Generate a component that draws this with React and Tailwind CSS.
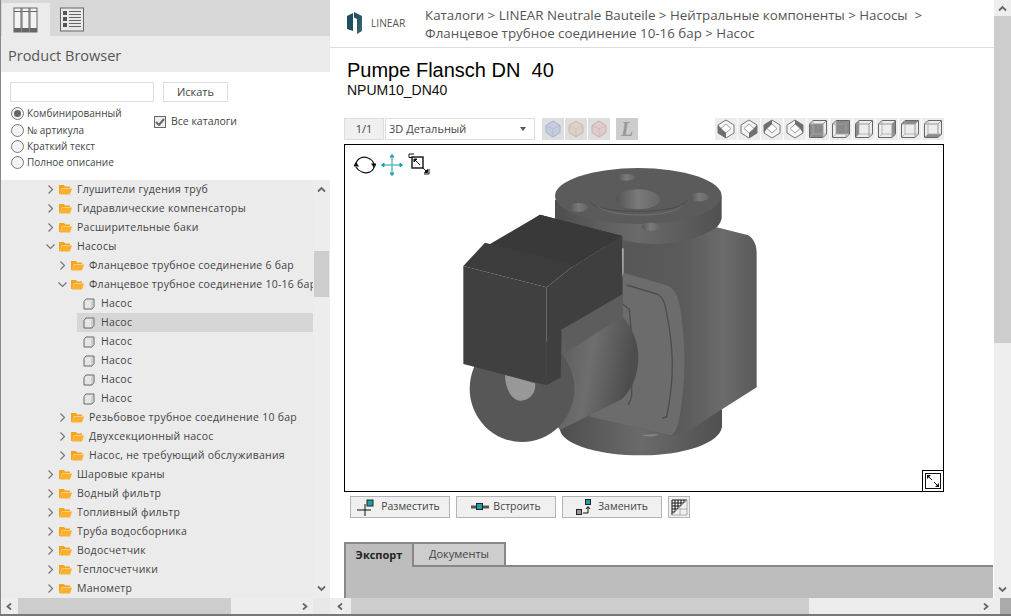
import React from "react";

const Chevron = ({ open }) => (
  <svg width="9" height="9" viewBox="0 0 9 9" className="shrink-0" fill="none" stroke="#777" strokeWidth="1.2">
    {open ? <path d="M0.5 2.5 L4.5 6.5 L8.5 2.5" /> : <path d="M2.5 0.5 L6.5 4.5 L2.5 8.5" />}
  </svg>
);

const Folder = () => (
  <svg width="13" height="11" viewBox="0 0 13 11" className="shrink-0">
    <path d="M0 1 H5 L6 2.5 H11 V4 H3 L1 10 H0 Z" fill="#f7a416" />
    <path d="M3.3 4.5 H13 L11 10.6 H0.8 Z" fill="#fbb02d" />
  </svg>
);

const Cube = () => (
  <svg width="12" height="12" viewBox="0 0 12 12" className="shrink-0">
    <path d="M3 1 H11 V8.5 L9 11 H1 V3.5 Z" fill="#e6e6e6" stroke="#666" strokeWidth="1" strokeLinejoin="round" />
    <path d="M9 3.5 V11 M9 3.5 L11 1" fill="none" stroke="#999" strokeWidth="0.6" />
  </svg>
);

const FolderRow = ({ level, open, children }) => (
  <div className={level === 0 ? "flex h-[19px] items-center pl-[45px] whitespace-nowrap" : "flex h-[19px] items-center pl-[57px] whitespace-nowrap"}>
    <Chevron open={open} />
    <span className="ml-[4px]"><Folder /></span>
    <span className="ml-[5px]">{children}</span>
  </div>
);

const Leaf = ({ selected }) => (
  <div className="flex h-[19px] items-center pl-[76px]">
    <div className={selected ? "flex h-[19px] flex-1 items-center bg-[#d6d6d6] pl-[6px]" : "flex h-[19px] flex-1 items-center pl-[6px]"}>
      <Cube />
      <span className="ml-[6px]">Насос</span>
    </div>
  </div>
);

const Radio = ({ checked, children }) => (
  <label className="flex h-[16.4px] items-center gap-[3px]">
    <span className="flex h-[13px] w-[13px] items-center justify-center rounded-full border border-[#777] bg-[#f4f4f4]">
      {checked && <span className="h-[7px] w-[7px] rounded-full bg-[#666]" />}
    </span>
    <span>{children}</span>
  </label>
);

const Diamond = ({ dark }) => (
  <svg width="18" height="20" viewBox="0 0 18 20">
    <path d="M9 1 L17 6 V14 L9 19 L1 14 V6 Z" fill="#f4f4f4" stroke="#777" strokeWidth="1" strokeLinejoin="round" />
    <path d={dark} fill="#6e6e6e" />
    <path d="M9 5 L14 9.5 L9 14 L4 9.5 Z" fill="#fff" stroke="#888" strokeWidth="0.8" />
  </svg>
);

const WireCube = ({ face }) => (
  <svg width="20" height="20" viewBox="0 0 20 20" fill="none">
    <path d={face} fill="#8a8a8a" />
    <path d="M1.5 5 L5 1.5 H18.5 V15 L15 18.5 H1.5 Z" stroke="#666" strokeWidth="1" />
    <path d="M1.5 5 H15 V18.5 M15 5 L18.5 1.5" stroke="#999" strokeWidth="1" />
    <path d="M5 1.5 V15 H18.5 M5 15 L1.5 18.5" stroke="#aaa" strokeWidth="0.8" />
  </svg>
);

const ViewBtn = ({ children }) => (
  <div className="flex h-[22px] w-[22px] items-center justify-center bg-[#ececec]">{children}</div>
);

const SmallArrow = ({ d }) => (
  <svg width="9" height="7" viewBox="0 0 9 7" fill="none" stroke="#666" strokeWidth="1.8"><path d={d} /></svg>
);

const ColorDiamond = ({ fill, stroke }) => (
  <div className="flex h-[22px] w-[22px] items-center justify-center bg-[#dedede]">
    <svg width="18" height="18" viewBox="0 0 18 18">
      <path d="M9 1 L16 5.5 V12.5 L9 17 L2 12.5 V5.5 Z" fill={fill} stroke={stroke} strokeWidth="1" strokeLinejoin="round" />
      <path d="M2 5.5 L9 9 L16 5.5 M9 9 V17" fill="none" stroke={stroke} strokeWidth="0.6" />
    </svg>
  </div>
);

const Pump = () => (
  <svg width="320" height="320" viewBox="0 0 960 960" className="block">
    <defs>
      <linearGradient id="fl" x1="0" x2="1" y1="0" y2="0">
        <stop offset="0" stopColor="#4e4e4e" /><stop offset="0.5" stopColor="#6a6a6a" /><stop offset="1" stopColor="#505050" />
      </linearGradient>
      <linearGradient id="bd" x1="0" x2="1" y1="0" y2="0">
        <stop offset="0" stopColor="#555" /><stop offset="0.55" stopColor="#5a5a5a" /><stop offset="0.8" stopColor="#6b6b6b" /><stop offset="1" stopColor="#5a5a5a" />
      </linearGradient>
      <linearGradient id="cy" x1="0" x2="1" y1="0" y2="0.25">
        <stop offset="0" stopColor="#505050" /><stop offset="0.6" stopColor="#6e6e6e" /><stop offset="1" stopColor="#4d4d4d" />
      </linearGradient>
      <linearGradient id="hl" x1="0" x2="1" y1="0" y2="0">
        <stop offset="0" stopColor="#555" /><stop offset="0.5" stopColor="#7a7a7a" /><stop offset="1" stopColor="#666" />
      </linearGradient>
    </defs>
    <path d="M360 760 V840 C370 890 500 918 610 916 C730 915 840 880 846 830 V770 Z" fill="url(#fl)" />
    <path d="M345 150 V215 C360 270 480 297 600 296 C720 295 835 260 845 205 V140 Z" fill="url(#fl)" />
    <path d="M550 270 C640 296 760 280 830 232 L925 256 C942 268 950 285 950 310 V712 L745 842 L700 858 L450 800 L550 370 Z" fill="url(#bd)" />
    <ellipse cx="595" cy="138" rx="250" ry="84" fill="#5b5b5b" />
    <path d="M450 155 C470 195 720 195 742 150" fill="none" stroke="#4b4b4b" strokeWidth="3" />
    <path d="M470 165 C500 205 700 205 728 165" fill="none" stroke="#747474" strokeWidth="2.5" />
    <ellipse cx="594" cy="148" rx="66" ry="30" fill="url(#hl)" />
    <ellipse cx="415" cy="172" rx="28" ry="13" fill="url(#hl)" />
    <ellipse cx="778" cy="141" rx="28" ry="13" fill="url(#hl)" />
    <ellipse cx="558" cy="82" rx="27" ry="10" fill="url(#hl)" />
    <ellipse cx="632" cy="230" rx="27" ry="12" fill="url(#hl)" />
    <path d="M550 368 L680 406 C705 415 715 440 720 470 C735 570 740 660 722 780 C715 830 705 855 690 856 L450 800 Z" fill="#6c6c6c" />
    <path d="M560 405 L650 432 C670 440 675 460 680 490 C700 590 705 680 680 800 L666 805" fill="none" stroke="#4d4d4d" strokeWidth="4" />
    <path d="M545 460 L568 478 L575 560 V740 L565 765" fill="none" stroke="#4d4d4d" strokeWidth="4" />
    <path d="M605 855 C620 862 650 860 655 852" fill="#888" />
    <path d="M365 540 L548 430 V500 C585 540 600 600 594 640 C590 690 570 725 545 748 L360 840 L300 760 Z" fill="url(#cy)" />
    <path d="M365 540 L548 430 V500 L380 605 Z" fill="#5d5d5d" />
    <ellipse cx="246" cy="716" rx="157" ry="160" fill="#575757" />
    <path d="M195 675 L285 700 C290 730 265 752 240 752 C215 750 195 715 195 675 Z" fill="#989898" />
    <path d="M70 348 L320 412 V706 L70 642 Z" fill="#404040" />
    <path d="M320 412 L397 350 L547 258 L548 432 L365 540 L362 682 L320 706 Z" fill="#3f3f3f" />
    <path d="M70 348 L135 278 L150 282 L300 194 L547 258 L397 350 L320 412 Z" fill="#3c3c3c" />
    <path d="M160 282 L300 194 L547 258 L397 350 L385 340 Z" fill="#393939" />
  </svg>
);

export default function App() {
  return (
    <div className="flex h-[616px] w-[1011px] flex-col overflow-hidden bg-white font-['Open_Sans',sans-serif] text-[#444]">
      <div className="flex h-[598px]">
        {/* left panel */}
        <div className="flex w-[330px] shrink-0 flex-col border-l border-[#888]">
          <div className="flex h-[36px] items-end gap-[1px] bg-[#d8d8d8] pl-[1px]">
            <div className="flex h-[33px] w-[48px] items-center justify-center bg-[#ebebeb]">
              <svg width="26" height="26" viewBox="0 0 26 26">
                {[1, 9, 17].map((x) => (
                  <g key={x}>
                    <rect x={x} y="1" width="7" height="24" fill="#f4f4f4" stroke="#666" strokeWidth="1" />
                    <rect x={x} y="4" width="7" height="1" fill="#666" />
                    <rect x={x} y="21" width="7" height="4" fill="#666" />
                  </g>
                ))}
              </svg>
            </div>
            <div className="flex h-[33px] w-[42px] items-center justify-center">
              <svg width="25" height="25" viewBox="0 0 25 25">
                <rect x="0.5" y="1" width="23" height="23" fill="#e9e9e9" stroke="#666" strokeWidth="1" />
                {[4, 10, 16].map((y) => (
                  <g key={y}>
                    <rect x="3" y={y} width="4" height="4" fill="#555" />
                    <rect x="9" y={y} width="12" height="1" fill="#666" />
                    <rect x="9" y={y + 3} width="12" height="1" fill="#666" />
                  </g>
                ))}
              </svg>
            </div>
          </div>
          <div className="flex h-[36px] items-center bg-[#ebebeb] pl-[7px] pt-[4px] text-[14.5px] text-[#555]">Product Browser</div>
          <div className="h-[108px] pl-[9px] pt-[10px] text-[10.5px]">
            <div className="flex items-center">
              <input className="h-[20px] w-[144px] border border-[#ddd] bg-white" aria-label="search" />
              <button className="ml-[9px] h-[20px] w-[65px] border border-[#ddd] bg-white text-[11px] text-[#444]">Искать</button>
            </div>
            <div className="mt-[3.5px] flex">
              <div className="w-[144px] pl-[1px] text-[10px]">
                <Radio checked>Комбинированный</Radio>
                <Radio>№ артикула</Radio>
                <Radio>Краткий текст</Radio>
                <Radio>Полное описание</Radio>
              </div>
              <div className="mt-[8px] flex h-[16px] items-center gap-[5px]">
                <span className="flex h-[12px] w-[12px] items-center justify-center border border-[#666] bg-[#eee]">
                  <svg width="10" height="8" viewBox="0 0 10 8" fill="none" stroke="#666" strokeWidth="2"><path d="M1 4 L4 7 L9 1" /></svg>
                </span>
                <span>Все каталоги</span>
              </div>
            </div>
          </div>
          <div className="flex min-h-0 flex-1">
            <div className="w-[312px] overflow-hidden bg-[#ebebeb] text-[10.5px] tracking-[0.25px]">
              <FolderRow level={0}>Глушители гудения труб</FolderRow>
              <FolderRow level={0}>Гидравлические компенсаторы</FolderRow>
              <FolderRow level={0}>Расширительные баки</FolderRow>
              <FolderRow level={0} open>Насосы</FolderRow>
              <FolderRow level={1}>Фланцевое трубное соединение 6 бар</FolderRow>
              <FolderRow level={1} open>Фланцевое трубное соединение 10-16 бар</FolderRow>
              <Leaf />
              <Leaf selected />
              <Leaf />
              <Leaf />
              <Leaf />
              <Leaf />
              <FolderRow level={1}>Резьбовое трубное соединение 10 бар</FolderRow>
              <FolderRow level={1}>Двухсекционный насос</FolderRow>
              <FolderRow level={1}>Насос, не требующий обслуживания</FolderRow>
              <FolderRow level={0}>Шаровые краны</FolderRow>
              <FolderRow level={0}>Водный фильтр</FolderRow>
              <FolderRow level={0}>Топливный фильтр</FolderRow>
              <FolderRow level={0}>Труба водосборника</FolderRow>
              <FolderRow level={0}>Водосчетчик</FolderRow>
              <FolderRow level={0}>Теплосчетчики</FolderRow>
              <FolderRow level={0}>Манометр</FolderRow>
            </div>
            <div className="flex w-[17px] flex-col items-center bg-[#ededed]">
              <div className="flex h-[18px] items-center"><SmallArrow d="M1 5.5 L4.5 2 L8 5.5" /></div>
              <div className="mt-[53px] h-[46px] w-[15px] bg-[#cdcdcd]" />
              <div className="flex-1" />
              <div className="flex h-[20px] items-center"><SmallArrow d="M1 1.5 L4.5 5 L8 1.5" /></div>
            </div>
          </div>
        </div>

        {/* right panel */}
        <div className="flex min-w-0 flex-1 flex-col">
          <div className="flex h-[48px] shrink-0 border-b border-[#ddd]">
            <div className="flex w-[95px] items-center gap-[8px] pl-[17px]">
              <svg width="16" height="23" viewBox="0 0 16 23">
                <defs>
                  <linearGradient id="lg" x1="0" x2="1" y1="0" y2="1">
                    <stop offset="0" stopColor="#1c4a57" /><stop offset="1" stopColor="#3f6a75" />
                  </linearGradient>
                </defs>
                <path d="M0 4 L6 1 V19 L0 17 Z" fill="#1f4f5c" />
                <path d="M7 0 L15 4 V19 L10 22 V7 L7 5.5 Z" fill="url(#lg)" />
              </svg>
              <span className="text-[10.2px] text-[#555]">LINEAR</span>
            </div>
            <div className="pt-[6px] text-[13.35px] leading-[18px] whitespace-nowrap text-[#555]">
              Каталоги &gt; LINEAR Neutrale Bauteile &gt; Нейтральные компоненты &gt; Насосы &nbsp;&gt;<br />
              Фланцевое трубное соединение 10-16 бар &gt; Насос
            </div>
          </div>
          <div className="min-h-0 flex-1 overflow-hidden pl-[14px]">
            <div className="mt-[10px] pl-[3px] font-['Liberation_Sans',sans-serif] text-[20px] leading-[24px] whitespace-pre text-black">Pumpe Flansch DN  40</div>
            <div className="pl-[3px] font-['Liberation_Sans',sans-serif] text-[14px] leading-[16px] text-[#111]">NPUM10_DN40</div>
            <div className="mt-[20px] flex h-[22px] w-[600px] items-center text-[11px]">
              <div className="flex h-[22px] w-[40px] items-center justify-center border border-[#ddd] bg-[#f0f0f0]">1/1</div>
              <div className="ml-[1px] flex h-[22px] w-[150px] items-center justify-between border border-[#ddd] bg-white pl-[3px] pr-[8px]">
                <span>3D Детальный</span>
                <span className="h-0 w-0 border-x-[3.5px] border-t-[4px] border-x-transparent border-t-[#555]" />
              </div>
              <div className="ml-[7px] flex gap-[1px]">
                <ColorDiamond fill="#c5cce0" stroke="#a9b2cc" />
                <ColorDiamond fill="#ddd2c6" stroke="#c8baaa" />
                <ColorDiamond fill="#e0cccc" stroke="#ccb0b0" />
              </div>
              <div className="ml-[6px] flex h-[22px] w-[22px] items-center justify-center bg-[#cdcdcd] font-['Liberation_Serif',serif] text-[20px] font-bold italic text-[#9a9a9a]">L</div>
              <div className="ml-auto flex gap-[1px]">
                <ViewBtn><Diamond dark="M1 6 L9 14 V19 L1 14 Z" /></ViewBtn>
                <ViewBtn><Diamond dark="M17 6 L9 14 V19 L17 14 Z" /></ViewBtn>
                <ViewBtn><Diamond dark="M1 14 V6 L9 1 V5 L4 9.5 Z" /></ViewBtn>
                <ViewBtn><Diamond dark="M17 14 V6 L9 1 V5 L14 9.5 Z" /></ViewBtn>
                <ViewBtn><WireCube face="M1.5 5 H15 V18.5 H1.5 Z" /></ViewBtn>
                <ViewBtn><WireCube face="M5 1.5 H18.5 V15 H5 Z" /></ViewBtn>
                <ViewBtn><WireCube face="M1.5 5 L5 1.5 V15 L1.5 18.5 Z" /></ViewBtn>
                <ViewBtn><WireCube face="M15 5 L18.5 1.5 V15 L15 18.5 Z" /></ViewBtn>
                <ViewBtn><WireCube face="M1.5 5 L5 1.5 H18.5 L15 5 Z" /></ViewBtn>
                <ViewBtn><WireCube face="M1.5 18.5 L5 15 H18.5 L15 18.5 Z" /></ViewBtn>
              </div>
            </div>
            <div className="relative mt-[4px] h-[348px] w-[600px] border border-black bg-white pl-[95px] pt-[5px]">
              <Pump />
              <div className="absolute left-[9px] top-[9px] flex items-start gap-[5px]">
                <svg width="22" height="22" viewBox="0 0 22 22" fill="none" stroke="#111" strokeWidth="1.2">
                  <path d="M2 10 C3 4 9 2 14 4 C17 5 19 7 20 10" />
                  <path d="M20 13 C19 18 13 20 8 18 C5 17 3 15 2 13" />
                  <path d="M0 12 L2 9 L4 12 Z M18 10 L20 13 L22 10 Z" fill="#111" />
                </svg>
                <svg width="22" height="22" viewBox="0 0 22 22" fill="none" stroke="#1aa0aa" strokeWidth="1">
                  <path d="M11 1 V21 M1 11 H21" />
                  <path d="M9 3 L11 0.5 L13 3 Z M9 19 L11 21.5 L13 19 Z M3 9 L0.5 11 L3 13 Z M19 9 L21.5 11 L19 13 Z" fill="#1aa0aa" />
                </svg>
                <svg width="22" height="22" viewBox="0 0 22 22" fill="none" stroke="#111" strokeWidth="1" className="-mt-[1px]">
                  <path d="M5 4.5 H1 V1 H6 M21 16 V21 H16" />
                  <rect x="4" y="4" width="11" height="11" strokeWidth="1.4" />
                  <path d="M6.5 6.5 L12 12 M14 14 L19 19" />
                  <path d="M6 6 H9 L6 9 Z M19.5 19.5 H16.5 L19.5 16.5 Z" fill="#111" />
                </svg>
              </div>
              <div className="absolute bottom-0 right-0 flex h-[21px] w-[21px] items-center justify-center border-l border-t border-black bg-white">
                <svg width="16" height="16" viewBox="0 0 16 16" fill="none" stroke="#111" strokeWidth="1">
                  <rect x="0.5" y="0.5" width="15" height="15" />
                  <path d="M3 3 L7 7 M13 13 L9 9" />
                  <path d="M2 2 H6 L2 6 Z M14 14 H10 L14 10 Z" fill="#111" stroke="none" />
                </svg>
              </div>
            </div>
            <div className="mt-[4px] flex gap-[6px] pl-[6px] text-[10.5px]">
              <button className="flex h-[22px] w-[100px] items-center justify-center gap-[4px] border border-[#b4b4b4] bg-[#f0f0f0] pr-[3px]">
                <svg width="20" height="17" viewBox="0 0 20 17" fill="none">
                  <path d="M8 5 V17 M0 11 H14" stroke="#111" strokeWidth="1" />
                  <rect x="10" y="1" width="6" height="6" fill="#1aa0aa" stroke="#222" strokeWidth="1" />
                </svg>
                Разместить
              </button>
              <button className="flex h-[22px] w-[100px] items-center justify-center gap-[4px] border border-[#b4b4b4] bg-[#f0f0f0]">
                <svg width="18" height="8" viewBox="0 0 18 8">
                  <rect x="0" y="2.5" width="18" height="3" fill="#555" />
                  <rect x="5.5" y="0.5" width="6" height="6" fill="#1aa0aa" stroke="#222" strokeWidth="1" />
                </svg>
                Встроить
              </button>
              <button className="flex h-[22px] w-[100px] items-center justify-center gap-[4px] border border-[#b4b4b4] bg-[#f0f0f0]">
                <svg width="18" height="17" viewBox="0 0 18 17" fill="none">
                  <rect x="0.5" y="10.5" width="5" height="5" fill="#999" stroke="#222" strokeWidth="1" />
                  <rect x="9.5" y="0.5" width="5" height="5" fill="#1aa0aa" stroke="#222" strokeWidth="1" />
                  <path d="M7 14 H12 V8 M10 10 L12 7.5 L14 10" stroke="#111" strokeWidth="1" />
                </svg>
                Заменить
              </button>
              <button className="flex h-[22px] w-[22px] items-center justify-center border border-[#b4b4b4] bg-[#f0f0f0]">
                <svg width="17" height="17" viewBox="0 0 17 17" fill="none">
                  <path d="M1 1 H16 L1 16 Z" fill="#fff" />
                  <path d="M1 1 H16 M1 4 H13 M1 7 H10 M1 10 H7 M1 13 H4 M1 1 V16 M4 1 V13 M7 1 V10 M10 1 V7 M13 1 V4" stroke="#111" strokeWidth="1" />
                  <path d="M16 1 L1 16 H16 Z M9 9 V16 M9 10 H16" stroke="#999" strokeWidth="0.8" />
                </svg>
              </button>
            </div>
            <div className="mt-[24px] flex h-[25px] pr-[1px]">
              <div className="flex w-[70px] items-center justify-center border-2 border-b-0 border-[#888] bg-[#bdbdbd] pb-[1px] text-[11px] font-bold text-[#222]">Экспорт</div>
              <div className="flex w-[92px] items-center justify-center border-y-2 border-r-2 border-b-[#888] border-r-[#888] border-t-[#888] bg-[#cdcdcd] text-[11px] text-[#444]">Документы</div>
              <div className="flex-1 border-b-2 border-[#888]" />
            </div>
            <div className="mr-[1px] h-[40px] border-l-2 border-[#888] bg-[#bdbdbd]" />
          </div>
        </div>

        {/* page scrollbar */}
        <div className="flex w-[17px] shrink-0 flex-col items-center bg-[#eeeeee]">
          <div className="flex h-[16px] items-center"><SmallArrow d="M1 5.5 L4.5 2 L8 5.5" /></div>
          <div className="h-[327px] w-full bg-[#cdcdcd]" />
          <div className="flex-1" />
          <div className="flex h-[18px] items-center"><SmallArrow d="M1 1.5 L4.5 5 L8 1.5" /></div>
        </div>
      </div>

      {/* bottom scrollbars */}
      <div className="flex h-[16px] shrink-0">
        <div className="flex w-[313px] items-center border-l border-[#888] bg-[#ededed]">
          <div className="flex w-[17px] justify-center"><SmallArrow d="M6 0.5 L2.5 3.5 L6 6.5" /></div>
          <div className="h-[16px] w-[213px] bg-[#cdcdcd]" />
          <div className="flex flex-1 justify-end pr-[4px]"><SmallArrow d="M3 0.5 L6.5 3.5 L3 6.5" /></div>
        </div>
        <div className="w-[17px] bg-[#e8e8e8]" />
        <div className="flex w-[670px] items-center bg-[#ededed]">
          <div className="flex w-[21px] justify-center"><SmallArrow d="M6 0.5 L2.5 3.5 L6 6.5" /></div>
          <div className="h-[16px] w-[458px] bg-[#cdcdcd]" />
          <div className="flex flex-1 justify-end pr-[10px]"><SmallArrow d="M3 0.5 L6.5 3.5 L3 6.5" /></div>
        </div>
        <div className="flex-1 bg-[#aaaaaa]" />
      </div>
      <div className="h-[2px] shrink-0 bg-[#777]" />
    </div>
  );
}
